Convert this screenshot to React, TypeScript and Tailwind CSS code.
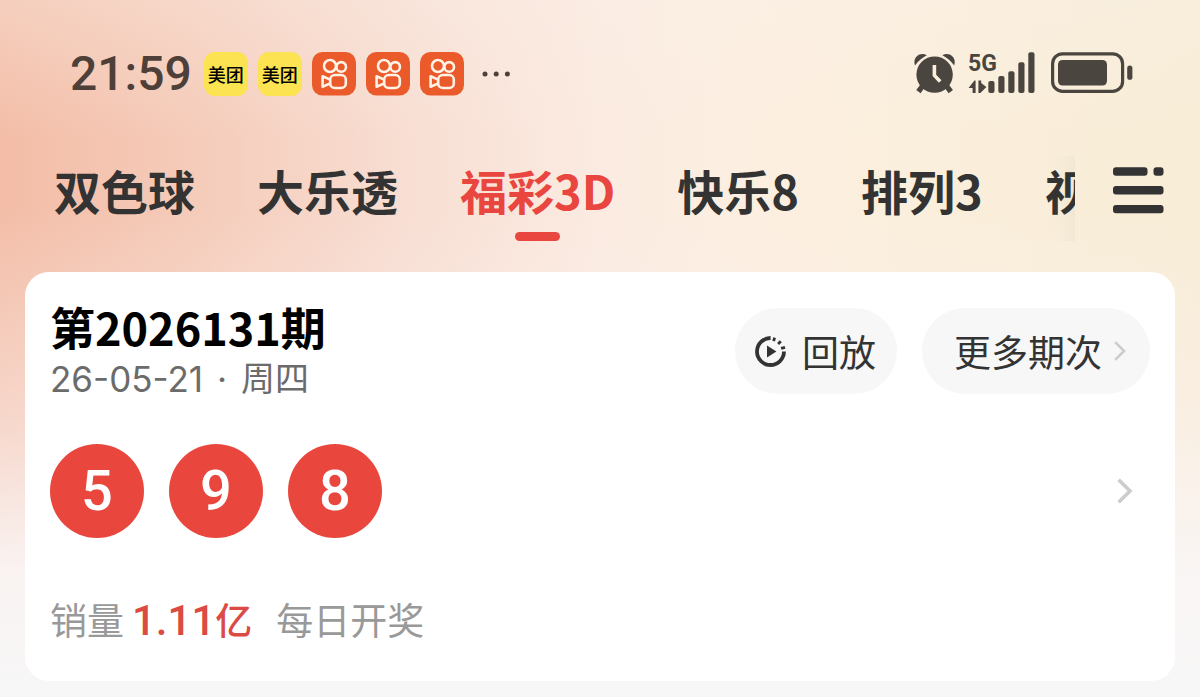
import { useState } from "react";

const tabs = ["双色球", "大乐透", "福彩3D", "快乐8", "排列3", "视频"];

function MeituanIcon() {
  return (
    <span className="flex size-11 items-center justify-center rounded-[11px] bg-[#fbe352] text-[18px] leading-none font-medium text-black">
      美团
    </span>
  );
}

function KuaishouIcon() {
  return (
    <svg className="size-11" viewBox="0 0 44 44" fill="none" stroke="#fff3e6" strokeWidth="2.6" strokeLinejoin="round" aria-hidden="true">
      <rect width="44" height="43.5" rx="10.5" fill="#ea5a2a" stroke="none" />
      <circle cx="18" cy="14" r="6" />
      <circle cx="29.2" cy="14.9" r="4.8" />
      <rect x="18.2" y="23" width="15.6" height="13" rx="4.6" />
      <path d="M18.2 27.6 L10.6 24.3 V34.8 L18.2 31.4" />
    </svg>
  );
}

function AlarmIcon() {
  return (
    <svg className="h-[42px] w-[42px] overflow-visible" viewBox="0 0 42 42" fill="none" aria-hidden="true">
      <g fill="#4a463f">
        <circle cx="20.6" cy="21.6" r="18.2" />
        <path d="M1 12.4 C-1.8 4.4 6 -1.4 12.8 2.2 C8.4 4.6 4.4 8 1 12.4 Z" />
        <path d="M40.2 12.4 C43 4.4 35.2 -1.4 28.4 2.2 C32.8 4.6 36.8 8 40.2 12.4 Z" />
      </g>
      <path d="M8.6 33 L4.4 38.6 M32.6 33 L36.8 38.6" stroke="#4a463f" strokeWidth="5.4" />
      <path d="M20.4 12 V22.4 L26.2 28.6" stroke="#fbefdc" strokeWidth="3.6" />
    </svg>
  );
}

function SignalIcon() {
  return (
    <svg className="h-11 w-[68px] overflow-visible" viewBox="0 0 68 44" fill="#4a463f" role="img" aria-label="5G">
      <text x="0" y="19" fontFamily="Roboto, sans-serif" fontWeight="700" fontSize="23">
        5G
      </text>
      <path d="M0.6 36 L6.4 28.4 H7.6 V41 H4.6 V36 Z" />
      <path d="M10.4 28.4 H13.2 V31 L18.4 35 L12.4 41 H10.4 Z" />
      <rect x="20.3" y="29" width="6.2" height="12" rx="2" />
      <rect x="30.3" y="24" width="6.2" height="17" rx="2" />
      <rect x="40.3" y="19.3" width="6.2" height="21.7" rx="2" />
      <rect x="50.3" y="10.3" width="6.2" height="30.7" rx="2" />
      <rect x="60.3" y="0.3" width="6.2" height="40.7" rx="2" />
    </svg>
  );
}

function BatteryIcon() {
  return (
    <svg className="h-11 w-[82px]" viewBox="0 0 82 44" fill="none" aria-hidden="true">
      <rect x="1.6" y="1.8" width="70" height="37.6" rx="10" stroke="#4a463f" strokeWidth="3.2" />
      <rect x="7" y="8" width="49" height="25.5" rx="4.5" fill="#4a463f" />
      <rect x="76.2" y="13.4" width="5.2" height="14.4" rx="2.6" fill="#4a463f" />
    </svg>
  );
}

function ReplayIcon() {
  return (
    <svg className="size-[31px]" viewBox="0 0 31 31" fill="none" stroke="#333" strokeWidth="3.8" aria-hidden="true">
      <path d="M15.6 2 A13.5 13.5 0 1 0 29 15.6" />
      <path d="M18.6 5.2 L19.6 1.6 M23.1 7.9 L25.8 5.2 M26.1 12.4 L30 11.3" strokeWidth="2.8" />
      <path d="M12 9.6 V21.4 L21.4 15.5 Z" fill="#333" stroke="none" />
    </svg>
  );
}

function StatusBar() {
  return (
    <div className="flex h-11 items-center justify-between pr-[67px] pl-[70px]">
      <div className="flex items-center gap-[10px]">
        <time className="mr-[2px] font-['Roboto',sans-serif] text-[48px] leading-11 font-medium text-[#4e4039]">21:59</time>
        <MeituanIcon />
        <MeituanIcon />
        <KuaishouIcon />
        <KuaishouIcon />
        <KuaishouIcon />
        <svg className="ml-2 h-[6px] w-[30px]" viewBox="0 0 30 6" fill="#4e4039" aria-label="更多通知" role="img">
          <circle cx="3" cy="3" r="2.5" />
          <circle cx="14.2" cy="3" r="2.5" />
          <circle cx="25.4" cy="3" r="2.5" />
        </svg>
      </div>
      <div className="flex items-center">
        <AlarmIcon />
        <span className="ml-3">
          <SignalIcon />
        </span>
        <span className="ml-[15px]">
          <BatteryIcon />
        </span>
      </div>
    </div>
  );
}

function TabBar() {
  const [active, setActive] = useState(2);
  return (
    <nav className="flex pt-[60px] pb-[31px]">
      <div className="flex min-w-0 flex-1 gap-[62px] overflow-hidden bg-linear-to-r from-transparent from-98% to-[#e9e2cf]/50 pl-[54px]">
        {tabs.map((name, i) => (
          <button
            key={name}
            type="button"
            onClick={() => setActive(i)}
            className={
              "flex shrink-0 flex-col items-center text-[47px] leading-[68px] font-bold whitespace-nowrap " +
              (i === active ? "text-[#e8463f]" : "text-[#333333]")
            }
          >
            {name}
            <span className={"mt-2 h-[9px] w-[45px] rounded-full " + (i === active ? "bg-[#e8463f]" : "bg-transparent")} />
          </button>
        ))}
      </div>
      <button type="button" aria-label="全部彩种" className="flex w-[125px] shrink-0 items-start pt-[11px] pl-[38px]">
        <svg className="h-[47px] w-[51px]" viewBox="0 0 51 47" fill="#333333" aria-hidden="true">
          <rect x="0" y="0.3" width="34.5" height="8.4" rx="3" />
          <rect x="40.5" y="0.3" width="10" height="8.4" rx="3" />
          <rect x="0" y="19.1" width="50.5" height="8.4" rx="3" />
          <rect x="0" y="37.9" width="50.5" height="8.4" rx="3" />
        </svg>
      </button>
    </nav>
  );
}

function DrawCard() {
  return (
    <main className="mx-[25px] rounded-3xl bg-white px-[25px] pt-[27px] pb-[35px]">
      <div className="flex items-center justify-between">
        <div>
          <h1 className="text-[45px] leading-[56px] font-bold text-black">第2026131期</h1>
          <p className="flex items-center font-['Inter','Noto_Sans_CJK_SC',sans-serif] text-[35px] leading-[48px] text-[#6b6b6b]">
            <span>26-05-21</span>
            <span className="mx-[14px]">·</span>
            <span className="text-[34px]">周四</span>
          </p>
        </div>
        <div className="flex gap-[25px] text-[37px] leading-[54px] text-[#333333]">
          <button type="button" className="flex items-center gap-4 rounded-full bg-[#f7f7f7] py-4 pr-[21px] pl-5">
            <ReplayIcon />
            回放
          </button>
          <button type="button" className="flex items-center gap-3 rounded-full bg-[#f7f7f7] py-4 pr-6 pl-8">
            更多期次
            <svg className="h-5 w-3" viewBox="0 0 12 20" fill="none" stroke="#cccccc" strokeWidth="2.6" aria-hidden="true">
              <path d="M1.2 1.2 L10 10 L1.2 18.8" />
            </svg>
          </button>
        </div>
      </div>
      <a href="#detail" aria-label="开奖详情" className="mt-[41px] flex items-center justify-between pr-[17px]">
        <span className="flex gap-[25px]">
          {[5, 9, 8].map((n) => (
            <span
              key={n}
              className="flex size-[94px] items-center justify-center rounded-full bg-[#e9463e] font-['Roboto',sans-serif] text-[56px] leading-none font-medium text-white"
            >
              {n}
            </span>
          ))}
        </span>
        <svg className="h-[26px] w-4" viewBox="0 0 16 26" fill="none" stroke="#cccccc" strokeWidth="3.6" aria-hidden="true">
          <path d="M1.6 1.8 L13 13 L1.6 24.2" />
        </svg>
      </a>
      <p className="mt-[54px] flex h-[54px] items-baseline text-[37px] leading-[54px] text-[#999999]">
        销量
        <strong className="ml-2 flex items-baseline font-['Roboto','Noto_Sans_CJK_SC',sans-serif] font-medium text-[#dc4b43]">
          <span className="text-[42px] leading-none">1.11</span>
          <span>亿</span>
        </strong>
        <span className="ml-6">每日开奖</span>
      </p>
    </main>
  );
}

export default function App() {
  return (
    <div className="min-h-screen bg-[linear-gradient(to_bottom,rgba(250,240,232,0.35)_0%,rgba(247,247,247,0)_20%,rgba(247,247,247,0)_30%,rgba(250,240,238,0.5)_60%,rgba(250,246,246,0.95)_82%,#f7f7f7_100%),linear-gradient(to_right,#f3bda7_0%,#f5cbb9_16%,#f8ded3_34%,#fbebe1_50%,#fcefe0_64%,#faeedb_82%,#f8edd6_100%)] pt-[52px] pb-4 font-['Noto_Sans_CJK_SC',sans-serif]">
      <StatusBar />
      <TabBar />
      <DrawCard />
    </div>
  );
}
